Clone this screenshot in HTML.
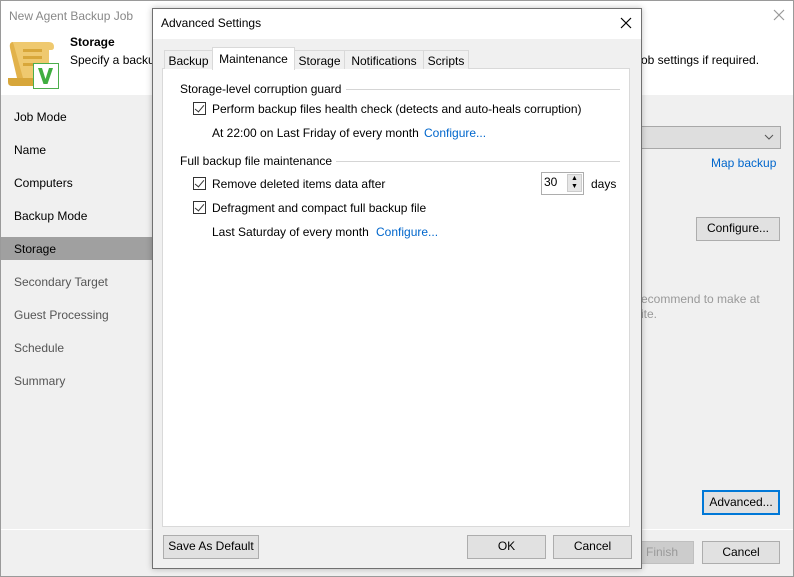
<!DOCTYPE html>
<html><head><meta charset="utf-8"><style>
*{box-sizing:border-box;margin:0;padding:0}
body{width:794px;height:577px;overflow:hidden;font-family:"Liberation Sans",sans-serif;font-size:12px;color:#000;position:relative;background:#f0f0f0}
.a{position:absolute;white-space:nowrap}
.btn{position:absolute;background:#e1e1e1;border:1px solid #adadad;text-align:center;line-height:21px;font-size:12px}
.cb{position:absolute;width:13px;height:13px;border:1px solid #333;background:#fff}
.cb:after{content:"";position:absolute;left:3px;top:0px;width:4px;height:8px;border:solid #333;border-width:0 1.5px 1.5px 0;transform:rotate(40deg)}
.link{color:#0066cc}
.hr{position:absolute;height:1px;background:#d5d5d5}
.tab{position:absolute;top:50px;height:19px;border:1px solid #d9d9d9;border-bottom:none;background:#f0f0f0;padding-top:3px;text-align:center;font-size:12px}
</style></head><body>
<div class="a" style="left:0;top:0;width:794px;height:577px;border:1px solid #9a9a9a;background:#f0f0f0"></div>
<div class="a" style="left:1px;top:1px;width:792px;height:94px;background:#fff"></div>
<div class="a" style="left:9px;top:9px;color:#888;font-size:12px">New Agent Backup Job</div>
<svg class="a" style="left:773px;top:9px" width="12" height="12"><path d="M1 1L11 11M11 1L1 11" stroke="#999" stroke-width="1.2"/></svg>
<svg class="a" style="left:7px;top:40px" width="52" height="50">
<path d="M6 2 H42 Q47 2 47 7 Q47 10 44 10 H42 V38 H12 Z" fill="#efc96f"/>
<path d="M6 2 Q2 2 3 8 L10 38 H16 Z" fill="#e2b24a"/>
<path d="M1 38 H36 V46 H5 Q1 46 1 42 Z" fill="#d7a63a"/>
<rect x="16" y="9" width="19" height="3" fill="#d8a73a"/><rect x="16" y="16" width="19" height="3" fill="#d8a73a"/><rect x="16" y="23" width="10" height="3" fill="#d8a73a"/>
<rect x="26.5" y="23.5" width="25" height="25" fill="#fff" stroke="#4cae4c"/>
<path d="M31 28 L36.5 44 H40.5 L46 28 H42 L38.5 39 L35 28 Z" fill="#3fae3f"/>
</svg>
<div class="a" style="left:70px;top:35px;font-weight:bold;font-size:12px">Storage</div>
<div class="a" style="left:70px;top:53px">Specify a backup</div>
<div class="a" style="left:641px;top:53px">ob settings if required.</div>
<div class="a" style="left:1px;top:237px;width:151px;height:23px;background:#a0a0a0"></div>
<div class="a" style="left:14px;top:110px">Job Mode</div>
<div class="a" style="left:14px;top:143px">Name</div>
<div class="a" style="left:14px;top:176px">Computers</div>
<div class="a" style="left:14px;top:209px">Backup Mode</div>
<div class="a" style="left:14px;top:242px">Storage</div>
<div class="a" style="left:14px;top:275px;color:#555">Secondary Target</div>
<div class="a" style="left:14px;top:308px;color:#555">Guest Processing</div>
<div class="a" style="left:14px;top:341px;color:#555">Schedule</div>
<div class="a" style="left:14px;top:374px;color:#555">Summary</div>
<div class="a" style="left:1px;top:529px;width:792px;height:1px;background:#fff"></div>
<div class="a" style="left:600px;top:126px;width:181px;height:23px;background:#dedede;border:1px solid #a8a8a8"></div>
<svg class="a" style="left:764px;top:134px" width="10" height="6"><path d="M1 1L5 5L9 1" stroke="#555" fill="none"/></svg>
<div class="a link" style="left:711px;top:156px">Map backup</div>
<div class="btn" style="left:696px;top:217px;width:84px;height:24px">Configure...</div>
<div class="a" style="left:641px;top:292px;color:#999">ecommend to make at</div>
<div class="a" style="left:641px;top:307px;color:#999">ite.</div>
<div class="btn" style="left:702px;top:490px;width:78px;height:25px;border:2px solid #0078d7;line-height:21px">Advanced...</div>
<div class="btn" style="left:630px;top:541px;width:64px;height:23px;color:#999;background:#ccc;border-color:#bfbfbf">Finish</div>
<div class="btn" style="left:702px;top:541px;width:78px;height:23px">Cancel</div>

<div class="a" style="left:152px;top:8px;width:490px;height:561px;border:1px solid #707070;background:#f0f0f0;box-shadow:0 0 6px rgba(0,0,0,.25)"></div>
<div class="a" style="left:153px;top:9px;width:488px;height:30px;background:#fff"></div>
<div class="a" style="left:161px;top:16px;font-size:12px">Advanced Settings</div>
<svg class="a" style="left:620px;top:17px" width="12" height="12"><path d="M1 1L11 11M11 1L1 11" stroke="#000" stroke-width="1.2"/></svg>
<div class="a" style="left:162px;top:68px;width:468px;height:459px;background:#fff;border:1px solid #d9d9d9"></div>
<div class="tab" style="left:164px;width:49px">Backup</div>
<div class="tab" style="left:294px;width:51px">Storage</div>
<div class="tab" style="left:344px;width:80px">Notifications</div>
<div class="tab" style="left:423px;width:46px">Scripts</div>
<div class="tab" style="left:212px;top:47px;width:83px;height:23px;background:#fff;padding-top:4px">Maintenance</div>

<div class="a" style="left:180px;top:82px">Storage-level corruption guard</div>
<div class="hr" style="left:346px;top:89px;width:274px"></div>
<div class="cb" style="left:193px;top:102px"></div>
<div class="a" style="left:212px;top:102px">Perform backup files health check (detects and auto-heals corruption)</div>
<div class="a" style="left:212px;top:126px">At 22:00 on Last Friday of every month</div>
<div class="a link" style="left:424px;top:126px">Configure...</div>
<div class="a" style="left:180px;top:154px">Full backup file maintenance</div>
<div class="hr" style="left:336px;top:161px;width:284px"></div>
<div class="cb" style="left:193px;top:177px"></div>
<div class="a" style="left:212px;top:177px">Remove deleted items data after</div>
<div class="a" style="left:541px;top:172px;width:43px;height:23px;border:1px solid #adadad;background:#fff;padding:2px 0 0 2px">30</div>
<div class="a" style="left:567px;top:174px;width:15px;height:18px;background:#e6e6e6;border:1px solid #ccc;font-size:7px;line-height:8px;text-align:center">▲<br>▼</div>
<div class="a" style="left:591px;top:177px">days</div>
<div class="cb" style="left:193px;top:201px"></div>
<div class="a" style="left:212px;top:201px">Defragment and compact full backup file</div>
<div class="a" style="left:212px;top:225px">Last Saturday of every month</div>
<div class="a link" style="left:376px;top:225px">Configure...</div>

<div class="btn" style="left:163px;top:535px;width:96px;height:24px">Save As Default</div>
<div class="btn" style="left:467px;top:535px;width:79px;height:24px">OK</div>
<div class="btn" style="left:553px;top:535px;width:79px;height:24px">Cancel</div>
</body></html>
